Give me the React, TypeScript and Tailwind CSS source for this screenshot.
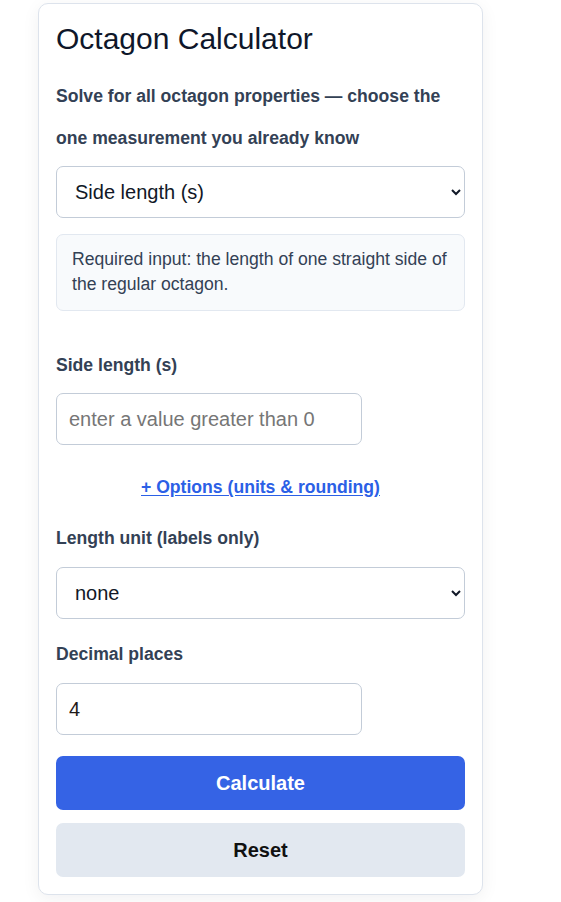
import React, { useState } from 'react';

const OctagonCalculator = () => {
  // form state, only kept so the controls behave like real inputs
  const [mode, setMode] = useState('side');
  const [value, setValue] = useState('');
  const [unit, setUnit] = useState('none');
  const [places, setPlaces] = useState('4');

  return (
    <div className="min-h-[902px] bg-white pl-[38px] pt-[3px] font-[family-name:Liberation_Sans,Arial,sans-serif]">
      <div className="w-[445px] rounded-[10px] border border-[#dde3ec] bg-white px-[17px] pt-[18px] pb-[17px] shadow-[0_4px_18px_rgba(15,23,42,0.06)]">
        <h1 className="text-[30px] leading-[34px] font-normal text-[#0f172a]">Octagon Calculator</h1>

        <p className="mt-[19px] text-[17.6px] leading-[42px] font-bold text-[#334155]">
          Solve for all octagon properties — choose the one measurement you already know
        </p>

        <select
          value={mode}
          onChange={(e) => setMode(e.target.value)}
          className="mt-[7px] block h-[52px] w-full rounded-[7px] border border-[#c3ccd8] bg-white pl-[14px] pr-[8px] text-[20px] text-[#111827]"
        >
          <option value="side">Side length (s)</option>
          <option value="area">Area (A)</option>
          <option value="perimeter">Perimeter (P)</option>
        </select>

        <div className="mt-[16px] rounded-[7px] border border-[#e2e8f0] bg-[#f8fafc] px-[15px] pt-[12px] pb-[14px] text-[17.6px] leading-[24.6px] text-[#334155]">
          Required input: the length of one straight side of the regular octagon.
        </div>

        <label className="mt-[42px] block text-[17.6px] leading-[24px] font-bold text-[#334155]">Side length (s)</label>
        <input
          value={value}
          onChange={(e) => setValue(e.target.value)}
          placeholder="enter a value greater than 0"
          className="mt-[16px] block h-[52px] w-[306px] rounded-[7px] border border-[#c3ccd8] bg-white px-[12px] text-[20px] text-[#111827] placeholder:text-[#767676] outline-none"
        />

        <div className="mt-[30px] text-center leading-[24px]">
          <a href="#" className="text-[17.6px] font-bold text-[#2b60e6] underline underline-offset-2">
            + Options (units &amp; rounding)
          </a>
        </div>

        <label className="mt-[26px] block text-[17.6px] leading-[24px] font-bold text-[#334155]">Length unit (labels only)</label>
        <select
          value={unit}
          onChange={(e) => setUnit(e.target.value)}
          className="mt-[17px] block h-[52px] w-full rounded-[7px] border border-[#c3ccd8] bg-white pl-[14px] pr-[8px] text-[20px] text-[#111827]"
        >
          <option value="none">none</option>
          <option value="cm">cm</option>
          <option value="m">m</option>
          <option value="in">in</option>
        </select>

        <label className="mt-[23px] block text-[17.6px] leading-[24px] font-bold text-[#334155]">Decimal places</label>
        <input
          value={places}
          onChange={(e) => setPlaces(e.target.value)}
          className="mt-[17px] block h-[52px] w-[306px] rounded-[7px] border border-[#c3ccd8] bg-white px-[12px] text-[20px] text-[#1f1a1a] outline-none"
        />

        <button className="mt-[21px] block h-[54px] w-full rounded-[7px] bg-[#3563e5] text-[20px] font-bold text-white">
          Calculate
        </button>
        <button className="mt-[13px] block h-[54px] w-full rounded-[7px] bg-[#e2e8f0] text-[20px] font-bold text-[#111111]">
          Reset
        </button>
      </div>
    </div>
  );
};

export default function App() {
  return <OctagonCalculator />;
}
